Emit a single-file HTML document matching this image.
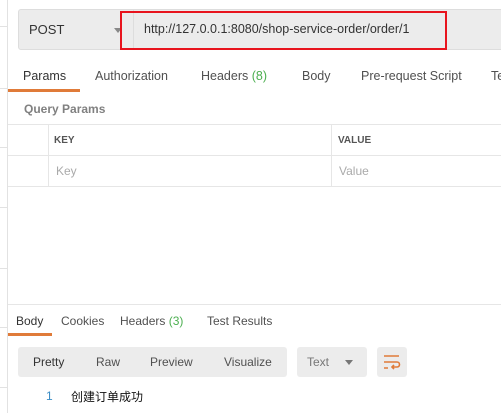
<!DOCTYPE html><html><head><style>
body{margin:0;width:501px;height:413px;background:#fff;font-family:"Liberation Sans","Noto Sans CJK SC",sans-serif;position:relative;overflow:hidden;color:#505050}
.a{position:absolute}
.t{font-size:12px;white-space:nowrap}
</style></head><body>
<div class="a" style="left:7px;top:0;width:1px;height:413px;background:#e2e2e2"></div>
<div class="a" style="left:0;top:26px;width:7px;height:1px;background:#e2e2e2"></div>
<div class="a" style="left:0;top:88px;width:7px;height:1px;background:#e2e2e2"></div>
<div class="a" style="left:0;top:147px;width:7px;height:1px;background:#e2e2e2"></div>
<div class="a" style="left:0;top:207px;width:7px;height:1px;background:#e2e2e2"></div>
<div class="a" style="left:0;top:268px;width:7px;height:1px;background:#e2e2e2"></div>
<div class="a" style="left:0;top:327px;width:7px;height:1px;background:#e2e2e2"></div>
<div class="a" style="left:0;top:387px;width:7px;height:1px;background:#e2e2e2"></div>

<div class="a" style="left:18px;top:9px;width:500px;height:39px;background:#ececec;border:1px solid #ddd;border-radius:3px"></div>
<div class="a" style="left:133px;top:10px;width:1px;height:38px;background:#ddd"></div>
<div class="a t" style="left:29px;top:22px;font-size:13px;color:#333">POST</div>
<div class="a" style="left:114px;top:28px;border:4px solid transparent;border-top:5px solid #888;width:0;height:0"></div>
<div class="a t" style="left:144px;top:22px;font-size:12.5px;color:#333">http://127.0.0.1:8080/shop-service-order/order/1</div>
<div class="a" style="left:120px;top:11px;width:323px;height:35px;border:2px solid #e8141e"></div>

<div class="a t" style="left:23px;top:69px;font-size:12.5px;color:#333">Params</div>
<div class="a t" style="left:95px;top:69px;font-size:12.5px">Authorization</div>
<div class="a t" style="left:201px;top:69px;font-size:12.5px">Headers <span style="color:#4caf50">(8)</span></div>
<div class="a t" style="left:302px;top:69px;font-size:12.5px">Body</div>
<div class="a t" style="left:361px;top:69px;font-size:12.5px">Pre-request Script</div>
<div class="a t" style="left:491px;top:69px;font-size:12.5px">Te</div>
<div class="a" style="left:8px;top:89px;width:72px;height:3px;background:#e07b39"></div>
<div class="a t" style="left:24px;top:102px;font-weight:bold;color:#808080">Query Params</div>

<div class="a" style="left:8px;top:124px;width:493px;height:1px;background:#e6e6e6"></div>
<div class="a" style="left:8px;top:155px;width:493px;height:1px;background:#e6e6e6"></div>
<div class="a" style="left:8px;top:186px;width:493px;height:1px;background:#e6e6e6"></div>
<div class="a" style="left:48px;top:124px;width:1px;height:62px;background:#e6e6e6"></div>
<div class="a" style="left:331px;top:124px;width:1px;height:62px;background:#e6e6e6"></div>
<div class="a t" style="left:54px;top:135px;font-size:10px;font-weight:bold;color:#555">KEY</div>
<div class="a t" style="left:338px;top:135px;font-size:10px;font-weight:bold;color:#555">VALUE</div>
<div class="a t" style="left:56px;top:164px;color:#aaa">Key</div>
<div class="a t" style="left:339px;top:164px;color:#aaa">Value</div>

<div class="a" style="left:8px;top:304px;width:493px;height:1px;background:#e6e6e6"></div>
<div class="a t" style="left:16px;top:314px;color:#333">Body</div>
<div class="a t" style="left:61px;top:314px">Cookies</div>
<div class="a t" style="left:120px;top:314px">Headers <span style="color:#4caf50">(3)</span></div>
<div class="a t" style="left:207px;top:314px">Test Results</div>
<div class="a" style="left:8px;top:333px;width:44px;height:3px;background:#e07b39"></div>

<div class="a" style="left:18px;top:347px;width:269px;height:30px;background:#ececec;border-radius:3px"></div>
<div class="a t" style="left:33px;top:355px;color:#333">Pretty</div>
<div class="a t" style="left:96px;top:355px">Raw</div>
<div class="a t" style="left:150px;top:355px">Preview</div>
<div class="a t" style="left:224px;top:355px">Visualize</div>
<div class="a" style="left:297px;top:347px;width:70px;height:30px;background:#ececec;border-radius:3px"></div>
<div class="a t" style="left:307px;top:355px;color:#777">Text</div>
<div class="a" style="left:345px;top:360px;border:4px solid transparent;border-top:5px solid #777;width:0;height:0"></div>
<div class="a" style="left:377px;top:347px;width:30px;height:30px;background:#ececec;border-radius:3px"></div>
<svg class="a" style="left:383px;top:353px" width="18" height="18" viewBox="0 0 18 18" fill="none" stroke="#e07b39" stroke-width="1.6"><path d="M1 3H16M1 9H14a2.5 2.5 0 0 1 0 5H9M11 12l-2 2 2 2M1 15H5"/></svg>

<div class="a t" style="left:46px;top:389px;color:#3b8dc6">1</div>
<div class="a t" style="left:71px;top:388px;color:#111">创建订单成功</div>
</body></html>
